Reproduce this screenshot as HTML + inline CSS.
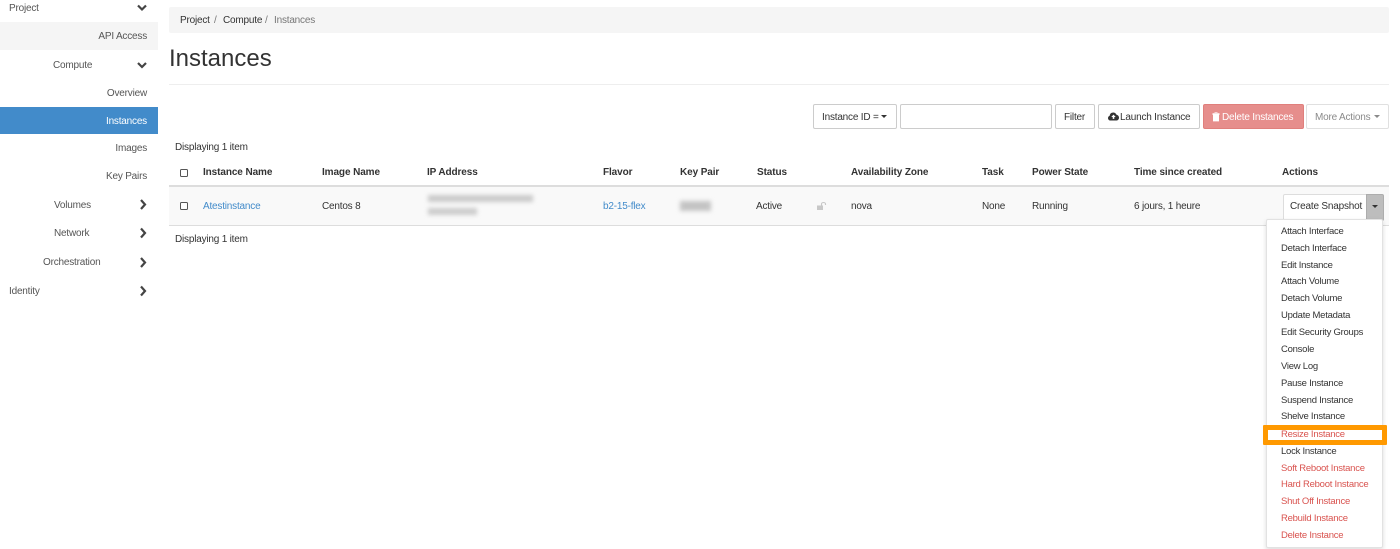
<!DOCTYPE html>
<html>
<head>
<meta charset="utf-8">
<style>
html,body{margin:0;padding:0;background:#fff;}
body{width:1400px;height:549px;position:relative;overflow:hidden;font-family:"Liberation Sans",sans-serif;font-size:10px;letter-spacing:-.2px;color:#333;}
#w{position:absolute;left:0;top:0;width:1400px;height:549px;filter:blur(.3px);}
.t{position:absolute;white-space:nowrap;line-height:14px;height:14px;margin-top:1px;}
.r{text-align:right;}
.s{color:#555;}
.b{font-weight:bold;color:#333;letter-spacing:-.1px;}
.l{color:#428bca;}
.box{position:absolute;box-sizing:border-box;}
.btn{position:absolute;box-sizing:border-box;border:1px solid #ccc;border-radius:2px;background:#fff;height:25px;}
.x{position:absolute;top:111px;white-space:nowrap;line-height:14px;height:14px;color:#333;}
.caret{position:absolute;width:0;height:0;border-left:3.5px solid transparent;border-right:3.5px solid transparent;border-top:3.5px solid currentColor;}
.cb{position:absolute;box-sizing:border-box;width:8px;height:8px;border:1px solid #555;border-radius:1.5px;background:#fff;}
.m{position:absolute;left:1281px;white-space:nowrap;line-height:14px;height:14px;font-size:9.5px;letter-spacing:-.25px;color:#333;}
.d{color:#d9534f;}
svg{position:absolute;overflow:visible;}
</style>
</head>
<body>
<div id="w">
<!-- sidebar -->
<div class="box" style="left:0;top:22px;width:158px;height:28px;background:#f5f5f5;"></div>
<div class="box" style="left:0;top:107px;width:158px;height:27px;background:#428bca;"></div>
<div class="t s" style="left:9px;top:1px;">Project</div>
<div class="t s r" style="right:1253px;top:29px;">API Access</div>
<div class="t s" style="left:53px;top:58px;">Compute</div>
<div class="t s r" style="right:1253px;top:86px;">Overview</div>
<div class="t r" style="right:1253px;top:114px;color:#fff;">Instances</div>
<div class="t s r" style="right:1253px;top:141px;">Images</div>
<div class="t s r" style="right:1253px;top:169px;">Key Pairs</div>
<div class="t s" style="left:54px;top:198px;">Volumes</div>
<div class="t s" style="left:54px;top:226px;">Network</div>
<div class="t s" style="left:43px;top:255px;">Orchestration</div>
<div class="t s" style="left:9px;top:284px;">Identity</div>
<svg style="left:0;top:0;" width="1" height="1">
<g fill="none" stroke="#444" stroke-width="2.2">
<path d="M138 5.500l4 4 4-4"/>
<path d="M138 63l4 4 4-4"/>
<path d="M141 200l4 4.500-4 4.500"/>
<path d="M141 228.500l4 4.500-4 4.500"/>
<path d="M141 258l4 4.500-4 4.500"/>
<path d="M141 286.500l4 4.500-4 4.500"/>
</g>
</svg>

<!-- breadcrumb -->
<div class="box" style="left:169px;top:7px;width:1220px;height:26px;background:#f5f5f5;border-radius:2px;"></div>
<div class="t" style="left:180px;top:13px;color:#333;">Project</div>
<div class="t" style="left:214px;top:13px;color:#777;">/</div>
<div class="t" style="left:223px;top:13px;color:#333;">Compute</div>
<div class="t" style="left:265px;top:13px;color:#777;">/</div>
<div class="t" style="left:274px;top:13px;color:#777;">Instances</div>

<!-- title -->
<div class="t" style="left:169px;top:43px;font-size:24px;letter-spacing:0;line-height:30px;height:30px;color:#333;">Instances</div>
<div class="box" style="left:169px;top:84px;width:1220px;height:1px;background:#eee;"></div>

<!-- toolbar -->
<div class="btn" style="left:813px;top:104px;width:84px;"></div>
<div class="x" style="left:822px;">Instance ID =</div>
<div class="caret" style="left:881px;top:115px;color:#333;"></div>
<div class="btn" style="left:900px;top:104px;width:152px;"></div>
<div class="btn" style="left:1055px;top:104px;width:40px;"></div>
<div class="x" style="left:1064px;">Filter</div>
<div class="btn" style="left:1098px;top:104px;width:102px;"></div>
<svg style="left:1108px;top:112px;" width="11" height="9" viewBox="0 0 11 9"><path fill="#333" d="M2.500 8.500C1 8.500 0 7.400 0 6.100 0 5 .7 4.100 1.700 3.800 1.800 1.900 3.300.5 5.200.5c1.500 0 2.800.9 3.300 2.300C9.900 3 11 4.200 11 5.700c0 1.600-1.200 2.800-2.800 2.800z"/><path fill="#fff" d="M5.500 2.600L7.700 5H6.300v1.900H4.700V5H3.300z"/></svg>
<div class="x" style="left:1120px;">Launch Instance</div>
<div class="btn" style="left:1203px;top:104px;width:101px;background:#e68e8c;border-color:#e07f7c;"></div>
<svg style="left:1212px;top:112px;" width="8" height="10" viewBox="0 0 8 10"><path fill="#fff" d="M.5 2h7v.9H7V9.400H1V2.900H.5zM2.500 1V.4h3V1H7.500v.7H.5V1z"/></svg>
<div class="x" style="left:1222px;color:#fff;">Delete Instances</div>
<div class="btn" style="left:1306px;top:104px;width:83px;border-color:#e0e0e0;"></div>
<div class="x" style="left:1315px;color:#8a8a8a;">More Actions</div>
<div class="caret" style="left:1374px;top:115px;color:#8a8a8a;"></div>

<!-- table -->
<div class="t" style="left:175px;top:140px;">Displaying 1 item</div>
<div class="cb" style="left:179.500px;top:168.500px;"></div>
<div class="t b" style="left:203px;top:165px;">Instance Name</div>
<div class="t b" style="left:322px;top:165px;">Image Name</div>
<div class="t b" style="left:427px;top:165px;">IP Address</div>
<div class="t b" style="left:603px;top:165px;">Flavor</div>
<div class="t b" style="left:680px;top:165px;">Key Pair</div>
<div class="t b" style="left:757px;top:165px;">Status</div>
<div class="t b" style="left:851px;top:165px;">Availability Zone</div>
<div class="t b" style="left:982px;top:165px;">Task</div>
<div class="t b" style="left:1032px;top:165px;">Power State</div>
<div class="t b" style="left:1134px;top:165px;">Time since created</div>
<div class="t b" style="left:1282px;top:165px;">Actions</div>

<div class="box" style="left:169px;top:185px;width:1220px;height:41px;background:#f9f9f9;border-top:2px solid #ddd;border-bottom:1px solid #ddd;"></div>
<div class="cb" style="left:179.500px;top:202px;"></div>
<div class="t l" style="left:203px;top:199px;">Atestinstance</div>
<div class="t" style="left:322px;top:199px;">Centos 8</div>
<div class="box" style="left:428px;top:195px;width:105px;height:7px;background:#cacaca;filter:blur(2px);"></div>
<div class="box" style="left:428px;top:208px;width:49px;height:7px;background:#cccccc;filter:blur(2px);"></div>
<div class="t l" style="left:603px;top:199px;">b2-15-flex</div>
<div class="box" style="left:680px;top:201px;width:31px;height:10px;background:#c4c4c4;filter:blur(2px);"></div>
<div class="t" style="left:756px;top:199px;">Active</div>
<svg style="left:817px;top:202px;" width="10" height="8" viewBox="0 0 10 8"><path fill="#c8c8c8" d="M0 3.500h6V8H0z"/><path fill="none" stroke="#c8c8c8" stroke-width="1.100" d="M4.500 3.500V2a2 1.500 0 0 1 4 0v1"/></svg>
<div class="t" style="left:851px;top:199px;">nova</div>
<div class="t" style="left:982px;top:199px;">None</div>
<div class="t" style="left:1032px;top:199px;">Running</div>
<div class="t" style="left:1134px;top:199px;">6 jours, 1 heure</div>
<div class="btn" style="left:1283px;top:194px;width:84px;height:27px;border-color:#ddd;border-radius:2px 0 0 2px;"></div>
<div class="t" style="left:1290px;top:199px;">Create Snapshot</div>
<div class="btn" style="left:1366px;top:194px;width:18px;height:27px;background:#bdbdbd;border-color:#adadad;border-radius:0 2px 2px 0;"></div>
<div class="caret" style="left:1371.500px;top:205px;color:#333;"></div>
<div class="t" style="left:175px;top:232px;">Displaying 1 item</div>

<!-- dropdown -->
<div class="box" style="left:1266px;top:219px;width:117px;height:329px;background:#fff;border:1px solid #e2e2e2;border-radius:2px;box-shadow:0 2px 5px rgba(0,0,0,.14);"></div>
<div class="box" style="left:1263px;top:425px;width:124px;height:20px;border:5px solid #f90;border-radius:1px;"></div>
<div class="m" style="top:225px;">Attach Interface</div>
<div class="m" style="top:242px;">Detach Interface</div>
<div class="m" style="top:259px;">Edit Instance</div>
<div class="m" style="top:275px;">Attach Volume</div>
<div class="m" style="top:292px;">Detach Volume</div>
<div class="m" style="top:309px;">Update Metadata</div>
<div class="m" style="top:326px;">Edit Security Groups</div>
<div class="m" style="top:343px;">Console</div>
<div class="m" style="top:360px;">View Log</div>
<div class="m" style="top:377px;">Pause Instance</div>
<div class="m" style="top:394px;">Suspend Instance</div>
<div class="m" style="top:410px;">Shelve Instance</div>
<div class="m d" style="top:428px;">Resize Instance</div>
<div class="m" style="top:445px;">Lock Instance</div>
<div class="m d" style="top:462px;">Soft Reboot Instance</div>
<div class="m d" style="top:478px;">Hard Reboot Instance</div>
<div class="m d" style="top:495px;">Shut Off Instance</div>
<div class="m d" style="top:512px;">Rebuild Instance</div>
<div class="m d" style="top:529px;">Delete Instance</div>
</div>
</body>
</html>
